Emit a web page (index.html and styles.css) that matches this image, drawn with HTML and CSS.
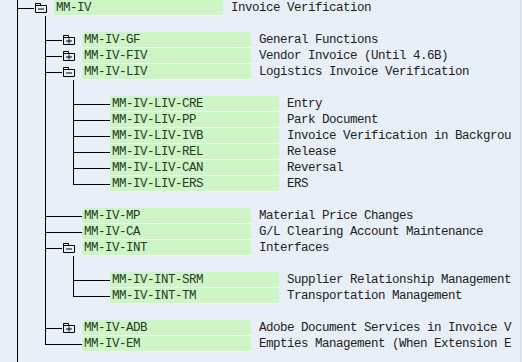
FILE: index.html
```html
<!DOCTYPE html>
<html>
<head>
<meta charset="utf-8">
<link rel="stylesheet" href="styles.css">
</head>
<body>
<div class="tree">
  <div class="row"><span class="c cont"><svg class="fold" viewBox="0 0 12 10" width="12" height="10"><path d="M0.5 2.5V0.5H5.5V2.5M0.5 2.5H11.5V9.5H0.5Z M3 6H9"/></svg></span><span class="key">MM-IV</span><span class="desc">Invoice Verification</span></div>
  <div class="row"><span class="g v"></span><span class="g v"></span></div>
  <div class="row"><span class="g v"></span><span class="c cont"><svg class="fold" viewBox="0 0 12 10" width="12" height="10"><path d="M0.5 2.5V0.5H5.5V2.5M0.5 2.5H11.5V9.5H0.5Z M3 6H9 M6 3.5V8.5"/></svg></span><span class="key">MM-IV-GF</span><span class="desc">General Functions</span></div>
  <div class="row"><span class="g v"></span><span class="c cont"><svg class="fold" viewBox="0 0 12 10" width="12" height="10"><path d="M0.5 2.5V0.5H5.5V2.5M0.5 2.5H11.5V9.5H0.5Z M3 6H9 M6 3.5V8.5"/></svg></span><span class="key">MM-IV-FIV</span><span class="desc">Vendor Invoice (Until 4.6B)</span></div>
  <div class="row"><span class="g v"></span><span class="c cont"><svg class="fold" viewBox="0 0 12 10" width="12" height="10"><path d="M0.5 2.5V0.5H5.5V2.5M0.5 2.5H11.5V9.5H0.5Z M3 6H9"/></svg></span><span class="key">MM-IV-LIV</span><span class="desc">Logistics Invoice Verification</span></div>
  <div class="row"><span class="g v"></span><span class="g v"></span><span class="g v"></span></div>
  <div class="row"><span class="g v"></span><span class="g v"></span><span class="c cont leaf"></span><span class="key">MM-IV-LIV-CRE</span><span class="desc">Entry</span></div>
  <div class="row"><span class="g v"></span><span class="g v"></span><span class="c cont leaf"></span><span class="key">MM-IV-LIV-PP</span><span class="desc">Park Document</span></div>
  <div class="row"><span class="g v"></span><span class="g v"></span><span class="c cont leaf"></span><span class="key">MM-IV-LIV-IVB</span><span class="desc">Invoice Verification in Backgrou</span></div>
  <div class="row"><span class="g v"></span><span class="g v"></span><span class="c cont leaf"></span><span class="key">MM-IV-LIV-REL</span><span class="desc">Release</span></div>
  <div class="row"><span class="g v"></span><span class="g v"></span><span class="c cont leaf"></span><span class="key">MM-IV-LIV-CAN</span><span class="desc">Reversal</span></div>
  <div class="row"><span class="g v"></span><span class="g v"></span><span class="c last leaf"></span><span class="key">MM-IV-LIV-ERS</span><span class="desc">ERS</span></div>
  <div class="row"><span class="g v"></span><span class="g v"></span></div>
  <div class="row"><span class="g v"></span><span class="c cont leaf"></span><span class="key">MM-IV-MP</span><span class="desc">Material Price Changes</span></div>
  <div class="row"><span class="g v"></span><span class="c cont leaf"></span><span class="key">MM-IV-CA</span><span class="desc">G/L Clearing Account Maintenance</span></div>
  <div class="row"><span class="g v"></span><span class="c cont"><svg class="fold" viewBox="0 0 12 10" width="12" height="10"><path d="M0.5 2.5V0.5H5.5V2.5M0.5 2.5H11.5V9.5H0.5Z M3 6H9"/></svg></span><span class="key">MM-IV-INT</span><span class="desc">Interfaces</span></div>
  <div class="row"><span class="g v"></span><span class="g v"></span><span class="g v"></span></div>
  <div class="row"><span class="g v"></span><span class="g v"></span><span class="c cont leaf"></span><span class="key">MM-IV-INT-SRM</span><span class="desc">Supplier Relationship Management</span></div>
  <div class="row"><span class="g v"></span><span class="g v"></span><span class="c last leaf"></span><span class="key">MM-IV-INT-TM</span><span class="desc">Transportation Management</span></div>
  <div class="row"><span class="g v"></span><span class="g v"></span></div>
  <div class="row"><span class="g v"></span><span class="c cont"><svg class="fold" viewBox="0 0 12 10" width="12" height="10"><path d="M0.5 2.5V0.5H5.5V2.5M0.5 2.5H11.5V9.5H0.5Z M3 6H9 M6 3.5V8.5"/></svg></span><span class="key">MM-IV-ADB</span><span class="desc">Adobe Document Services in Invoice V</span></div>
  <div class="row"><span class="g v"></span><span class="c last leaf"></span><span class="key">MM-IV-EM</span><span class="desc">Empties Management (When Extension E</span></div>
  <div class="row"><span class="g v"></span></div>
</div>
</body>
</html>
```
FILE: styles.css
```css
html, body {
  margin: 0;
  padding: 0;
  background: #e9eff7;
  overflow: hidden;
}
.tree {
  width: 520px;
  height: 362px;
  border-right: 1px solid #d6dce4;
  overflow: hidden;
  font-family: "Liberation Mono", "Courier New", monospace;
  font-size: 12.5px;
  letter-spacing: -0.5px;
  color: #222;
}
.row {
  display: flex;
  align-items: flex-start;
  height: 16px;
  padding-left: 17px;
  white-space: nowrap;
}
.g {
  flex: 0 0 28px;
  height: 16px;
}
.g.v {
  background: linear-gradient(#000, #000) no-repeat 0 0 / 1px 100%;
}
.c {
  flex: 0 0 37px;
  height: 16px;
  display: flex;
  align-items: flex-start;
  padding-left: 18px;
  box-sizing: border-box;
}
.c.cont {
  background:
    linear-gradient(#000, #000) no-repeat 0 0 / 1px 100%,
    linear-gradient(#000, #000) no-repeat 0 8px / 17px 1px;
}
.c.last {
  background:
    linear-gradient(#000, #000) no-repeat 0 0 / 1px 9px,
    linear-gradient(#000, #000) no-repeat 0 8px / 17px 1px;
}
.c.cont.leaf { background-size: 1px 100%, 37px 1px; }
.c.last.leaf { background-size: 1px 9px, 37px 1px; }
.fold {
  display: block;
  margin-top: 3px;
  fill: none;
  stroke: #000;
  stroke-width: 1;
}
.key {
  flex: 0 0 169px;
  box-sizing: border-box;
  height: 16px;
  line-height: 15px;
  padding: 1px 0 0 2px;
  background: #cdf5c6;
  border-bottom: 1px solid #eef6ee;
  color: #2a3a2a;
}
.desc {
  margin-left: 8px;
  padding-top: 1px;
  line-height: 15px;
}
```
